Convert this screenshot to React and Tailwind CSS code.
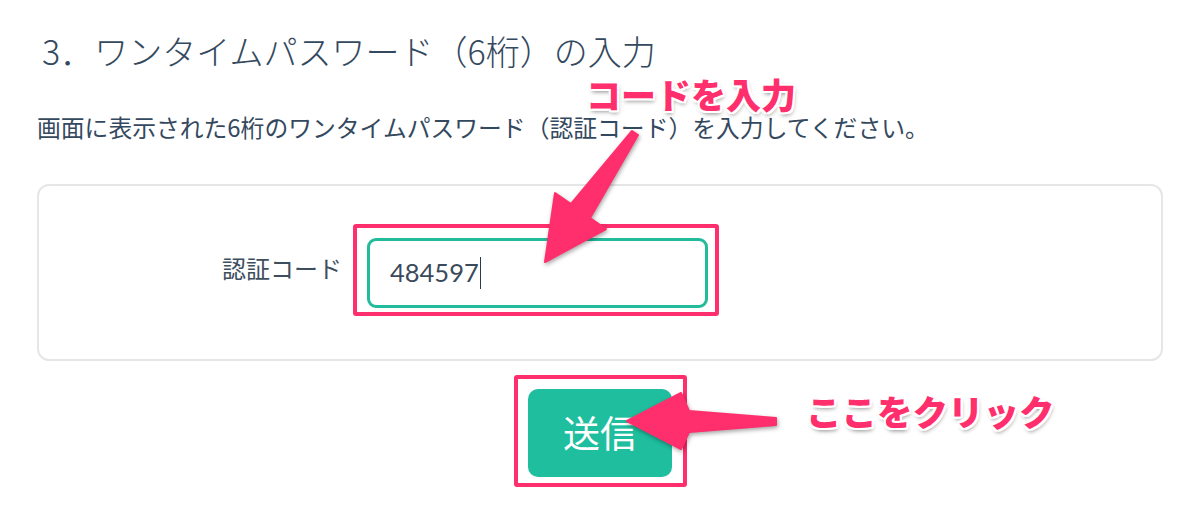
export default function App() {
  const jp = { fontFamily: '"Noto Sans CJK JP", "Noto Sans", sans-serif' };
  const outline =
    "[text-shadow:2px_0_0_#fff,-2px_0_0_#fff,0_2px_0_#fff,0_-2px_0_#fff,2px_2px_0_#fff,-2px_-2px_0_#fff,2px_-2px_0_#fff,-2px_2px_0_#fff,1px_3px_4px_rgba(0,0,0,0.45)]";
  return (
    <div className="relative w-[1200px] h-[514px] overflow-hidden bg-white text-[#34495e]" style={jp}>
      <div className="px-[37px]">
        <h1 className="pt-[28px] pl-[5px] text-[34px] leading-[45px] font-light">
          3．ワンタイムパスワード（6桁）の入力
        </h1>
        <p className="mt-[36px] text-[23.8px] leading-[35px]">
          画面に表示された6桁のワンタイムパスワード（認証コード）を入力してください。
        </p>
        <div className="mt-[40px] h-[177px] rounded-[12px] border-2 border-[#e6e6e6] flex items-center">
          <div className="w-[303px] text-right text-[24px] leading-[30px] text-[#3d4e5e] -mt-[9px]">認証コード</div>
          <div className="relative ml-[25px]">
            <div className="w-[341px] h-[70px] rounded-[9px] border-[3px] border-[#22bb9b] flex items-center pl-[20px]">
              <span className="text-[25.5px] text-[#3a4a5a]" style={{ fontFamily: 'Lato, "Noto Sans", sans-serif' }}>
                484597
              </span>
              <span className="w-px h-[32px] bg-[#2d3b48] ml-[1px]" />
            </div>
            <div className="absolute -left-[14px] -top-[14px] -right-[11px] -bottom-[8px] border-4 border-[#ff2e6c] rounded-[3px]" />
          </div>
        </div>
        <div className="flex justify-center mt-[28px]">
          <div className="relative">
            <div className="w-[144px] h-[88px] rounded-[10px] bg-[#1ebe9e] flex items-center justify-center text-white text-[37px] leading-none pb-[2px]">
              送信
            </div>
            <div className="absolute -left-[14px] -top-[14px] -right-[15px] -bottom-[10px] border-4 border-[#ff2e6c] rounded-[3px]" />
          </div>
        </div>
      </div>

      <svg
        className="absolute left-0 top-0 pointer-events-none [filter:drop-shadow(1px_2px_2px_rgba(0,0,0,0.35))]"
        width="1200"
        height="514"
        viewBox="0 0 1200 514"
      >
        <polygon
          points="632,131 571,204 555,193 545,262 606,229 590,218 638,135"
          fill="#ff2e6c"
          stroke="#ff2e6c"
          strokeWidth="2"
          strokeLinejoin="round"
        />
        <polygon
          points="776,418 689,411 681,393 627,421 681,449 689,432 776,425"
          fill="#ff2e6c"
          stroke="#ff2e6c"
          strokeWidth="2"
          strokeLinejoin="round"
        />
      </svg>

      <div className={`absolute left-[586px] top-[76px] text-[35px] leading-none font-black text-[#ff2e6c] ${outline}`}>
        コードを入力
      </div>
      <div className={`absolute left-[806px] top-[393px] text-[35.5px] leading-none font-black text-[#ff2e6c] ${outline}`}>
        ここをクリック
      </div>
    </div>
  );
}
